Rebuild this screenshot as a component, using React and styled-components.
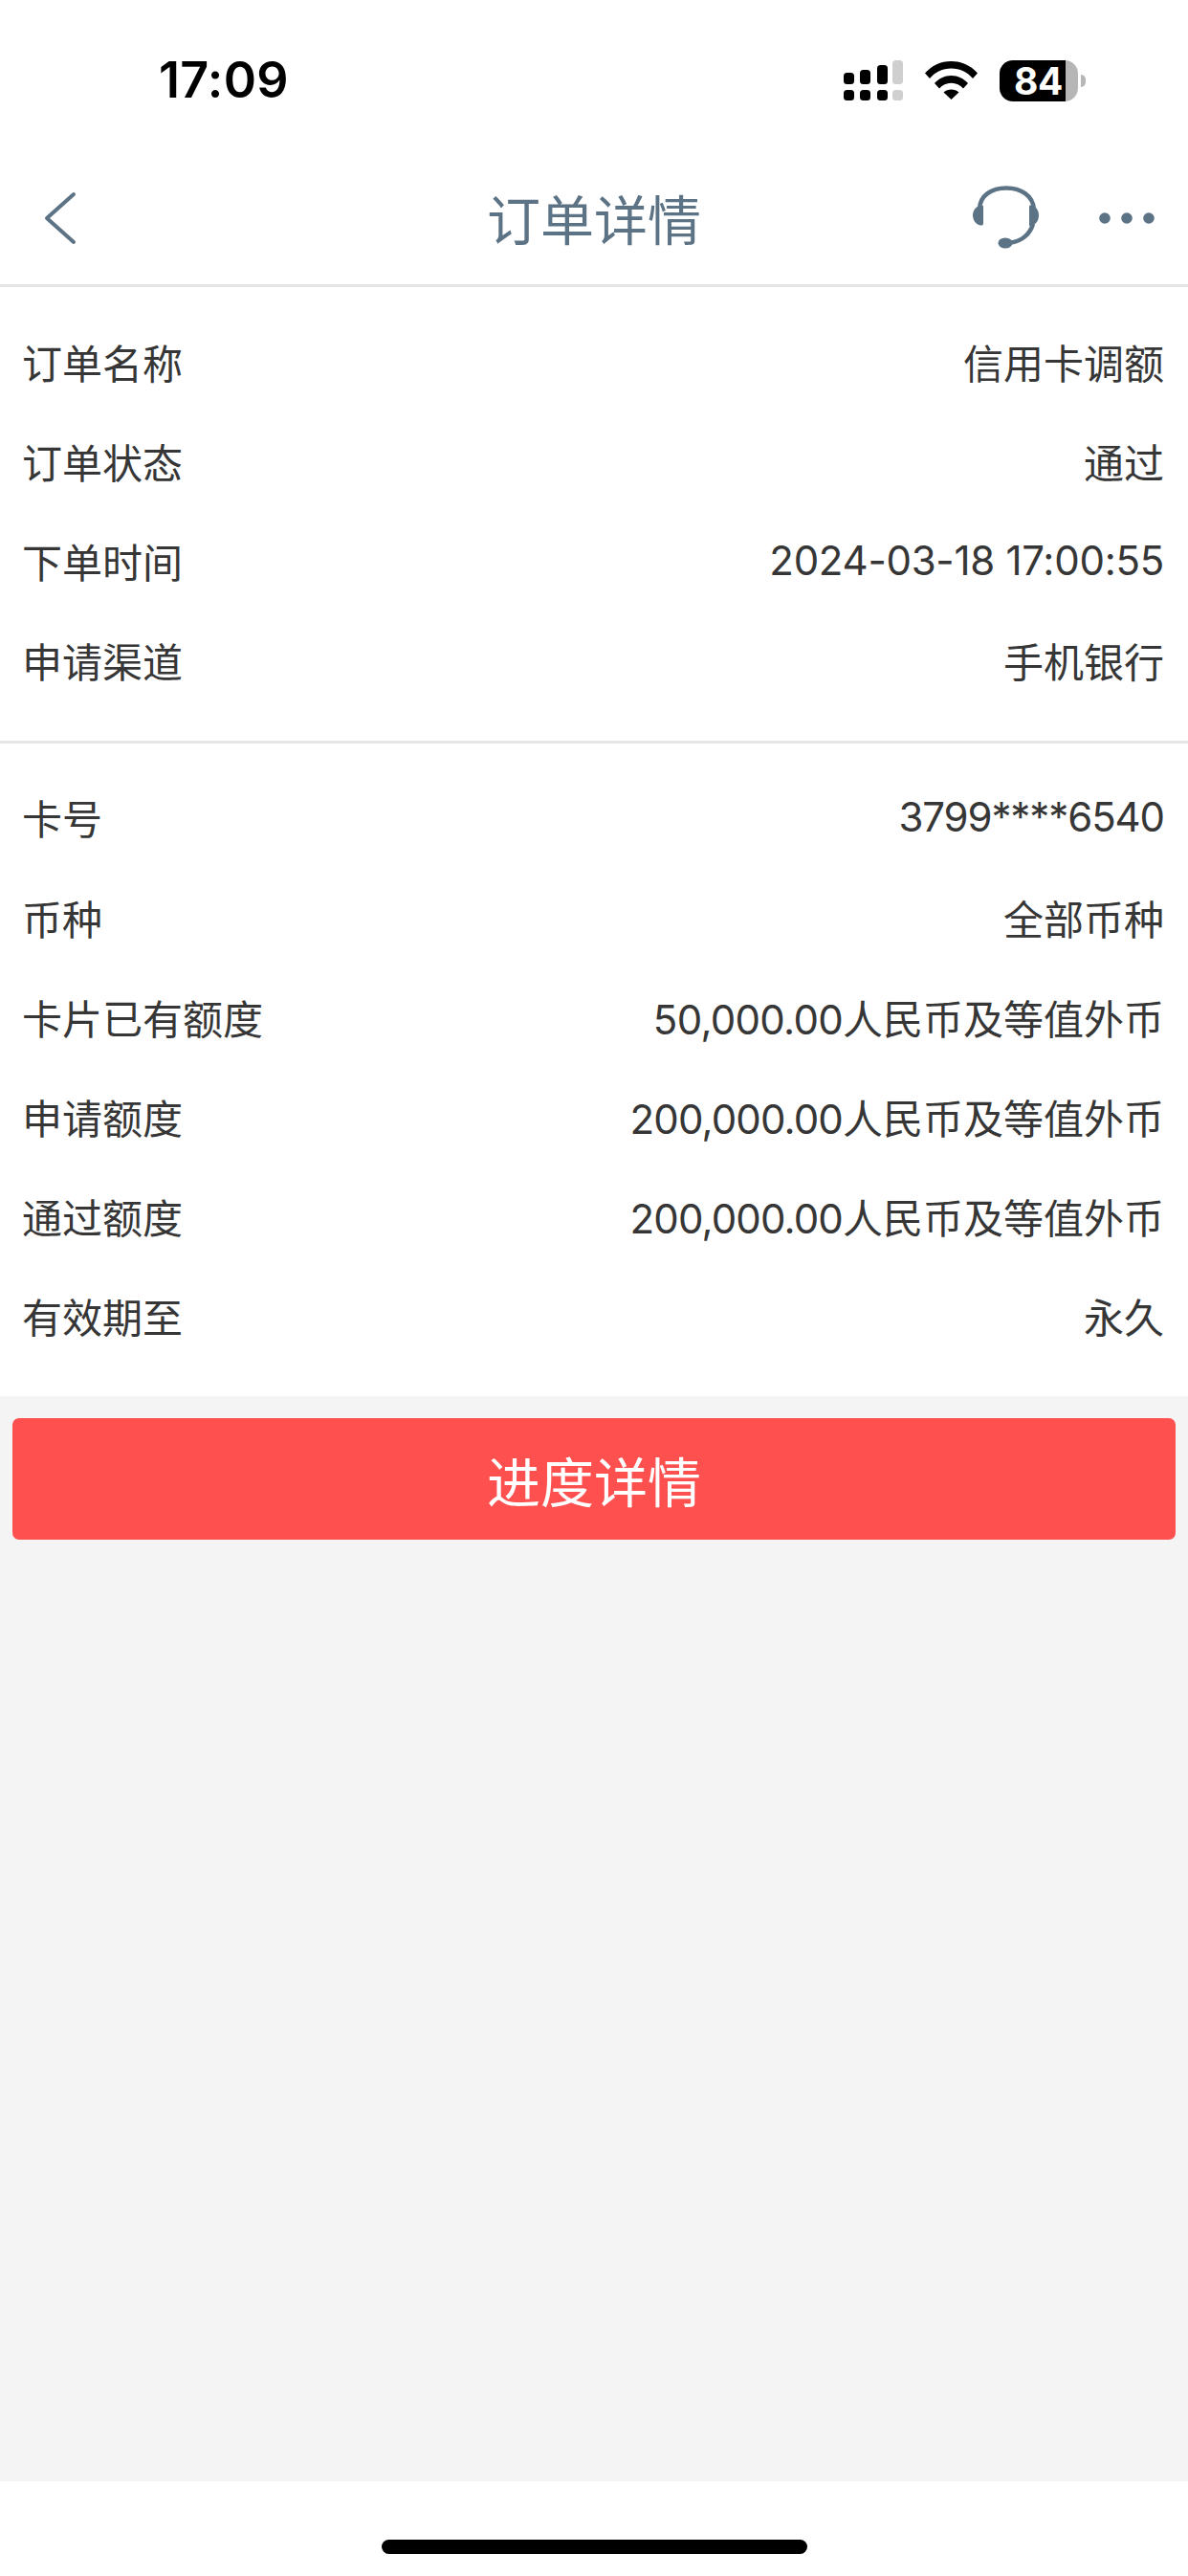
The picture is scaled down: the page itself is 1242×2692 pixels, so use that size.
import React from "react";
import styled, { createGlobalStyle } from "styled-components";

const Global = createGlobalStyle`
  html, body { margin: 0; padding: 0; background: #fff; }
  * { box-sizing: border-box; }
`;

const FONT = `Inter, "Noto Sans CJK SC", sans-serif`;

const Page = styled.div`
  width: 1242px;
  height: 2692px;
  display: flex;
  flex-direction: column;
  background: #f4f4f4;
  font-family: ${FONT};
`;

const StatusBar = styled.div`
  height: 168px;
  background: #fff;
  display: flex;
  align-items: center;
  justify-content: space-between;
  padding: 0 115px 0 166px;
  color: #000;
`;

const Clock = styled.div`
  font-size: 52px;
  font-weight: 600;
  letter-spacing: 0.3px;
  line-height: 1;
`;

const StatusIcons = styled.div`
  display: flex;
  align-items: center;
  gap: 23px;
`;

const Battery = styled.div`
  position: relative;
  width: 82px;
  height: 43px;
  border-radius: 14px;
  background: linear-gradient(90deg, #000 0 84%, #b6b6b6 84% 100%);
  color: #fff;
  font-size: 39px;
  font-weight: 700;
  line-height: 43px;
  padding-left: 15px;
  letter-spacing: -0.5px;
`;

const BatteryTip = styled.span`
  position: absolute;
  right: -8px;
  top: 15px;
  width: 5px;
  height: 13px;
  border-radius: 0 5px 5px 0;
  background: #b6b6b6;
`;

const Nav = styled.div`
  height: 132px;
  padding-bottom: 10px;
  background: #fff;
  display: grid;
  grid-template-columns: 1fr auto 1fr;
  align-items: center;
  border-bottom: 3px solid #e5e5e5;
`;

const NavLeft = styled.div`
  padding-left: 46px;
  display: flex;
`;

const NavTitle = styled.div`
  font-size: 56px;
  line-height: 70px;
  padding-top: 6px;
  color: #5c7386;
`;

const NavRight = styled.div`
  display: flex;
  justify-content: flex-end;
  align-items: center;
  padding-right: 35px;
  gap: 60px;
`;

const Section = styled.section`
  background: #fff;
  padding: ${(p) => p.$pad};
  border-bottom: ${(p) => (p.$divider ? "3px solid #e5e5e5" : "none")};
`;

const Row = styled.div`
  height: 104.2px;
  display: flex;
  align-items: center;
  justify-content: space-between;
  padding: 0 25px 0 23px;
  font-size: 42px;
  color: #363636;
`;

const Num = styled.span`
  letter-spacing: ${(p) => p.$track}px;
`;

const ActionWrap = styled.div`
  padding: 23px 13px 0;
  flex: 1;
`;

const Action = styled.button`
  display: block;
  width: 100%;
  height: 127px;
  border: 0;
  border-radius: 7px;
  background: #ff5050;
  color: #fff;
  font-family: ${FONT};
  font-size: 56px;
`;

const Footer = styled.div`
  height: 99px;
  background: #fff;
  display: flex;
  justify-content: center;
  align-items: flex-end;
  padding-bottom: 23px;
`;

const HomeBar = styled.div`
  width: 445px;
  height: 15px;
  border-radius: 8px;
  background: #000;
`;

const Signal = () => (
  <svg width="62" height="42" viewBox="0 0 62 42" fill="#000">
    <rect x="0" y="13" width="11" height="12" rx="3.5" />
    <rect x="17" y="10" width="11" height="15" rx="3.5" />
    <rect x="35" y="5" width="11" height="20" rx="3.5" />
    <rect x="51" y="0" width="11" height="25" rx="3.5" fill="#cfcfcf" />
    <rect x="0" y="31" width="11" height="11" rx="3.5" />
    <rect x="17" y="31" width="11" height="11" rx="3.5" />
    <rect x="35" y="31" width="11" height="11" rx="3.5" />
    <rect x="51" y="31" width="11" height="11" rx="3.5" fill="#cfcfcf" />
  </svg>
);

const Wifi = () => (
  <svg width="55" height="40" viewBox="0 0 55 40" fill="#000">
    <path d="M0 12.500C7 4.500 16.500 0 27.500 0S48 4.500 55 12.500L50 18C44.500 11.500 36.500 7.500 27.500 7.500S10.500 11.500 5 18Z" />
    <path d="M10 23C14.500 18 20.500 15 27.500 15S40.500 18 45 23L40 28.500C36.800 25 32.500 22.800 27.500 22.800S18.200 25 15 28.500Z" />
    <path d="M19.500 32.500C21.500 30.500 24.300 29.500 27.500 29.500S33.500 30.500 35.500 32.500L27.500 40Z" />
  </svg>
);

const Back = () => (
  <svg width="36" height="58" viewBox="0 0 36 58" fill="none" stroke="#5c7386" strokeWidth="4" strokeLinecap="round" strokeLinejoin="round">
    <path d="M31 4L3 29L31 54" />
  </svg>
);

const Headset = () => (
  <svg width="72" height="68" viewBox="0 0 72 68" fill="#5c7386">
    <path d="M7 25C7 10 20 2.500 35 2.500S63 10 64 25" fill="none" stroke="#5c7386" strokeWidth="4.500" />
    <path d="M9.500 20.500H8C3 22 0 26 0 31S3 40.500 8 41.500C10 41.800 11 41 11 39.500V22C11 21 10.500 20.500 9.500 20.500Z" />
    <path d="M60 20.500H61.500C66.500 22 69 26 69 31S66.500 40.500 61.500 41.500L59 42V22C59 21 59.500 20.500 60 20.500Z" />
    <path d="M63 40C60 50 52 58 40 59.500" fill="none" stroke="#5c7386" strokeWidth="4.500" />
    <ellipse cx="34" cy="60" rx="7.500" ry="5.500" />
  </svg>
);

const More = () => (
  <svg width="58" height="12" viewBox="0 0 58 12" fill="#5c7386">
    <circle cx="6" cy="6" r="5.800" />
    <circle cx="29" cy="6" r="5.800" />
    <circle cx="52" cy="6" r="5.800" />
  </svg>
);

const orderRows = [
  { label: "订单名称", value: "信用卡调额" },
  { label: "订单状态", value: "通过" },
  { label: "下单时间", num: "2024-03-18 17:00:55", track: -0.27 },
  { label: "申请渠道", value: "手机银行" },
];

const cardRows = [
  { label: "卡号", num: "3799****6540", track: -1.1 },
  { label: "币种", value: "全部币种" },
  { label: "卡片已有额度", num: "50,000.00", track: -0.7, value: "人民币及等值外币" },
  { label: "申请额度", num: "200,000.00", track: -0.86, value: "人民币及等值外币" },
  { label: "通过额度", num: "200,000.00", track: -0.86, value: "人民币及等值外币" },
  { label: "有效期至", value: "永久" },
];

const Rows = ({ data }) =>
  data.map(({ label, num, track, value }) => (
    <Row key={label}>
      <span>{label}</span>
      <span>
        {num && <Num $track={track}>{num}</Num>}
        {value}
      </span>
    </Row>
  ));

export default function App() {
  return (
    <Page>
      <Global />
      <StatusBar>
        <Clock>17:09</Clock>
        <StatusIcons>
          <Signal />
          <Wifi />
          <Battery>
            84
            <BatteryTip />
          </Battery>
        </StatusIcons>
      </StatusBar>
      <Nav>
        <NavLeft>
          <Back />
        </NavLeft>
        <NavTitle>订单详情</NavTitle>
        <NavRight>
          <Headset />
          <More />
        </NavRight>
      </Nav>
      <Section $pad="25px 0 32px" $divider>
        <Rows data={orderRows} />
      </Section>
      <Section $pad="25px 0 32px">
        <Rows data={cardRows} />
      </Section>
      <ActionWrap>
        <Action>进度详情</Action>
      </ActionWrap>
      <Footer>
        <HomeBar />
      </Footer>
    </Page>
  );
}
